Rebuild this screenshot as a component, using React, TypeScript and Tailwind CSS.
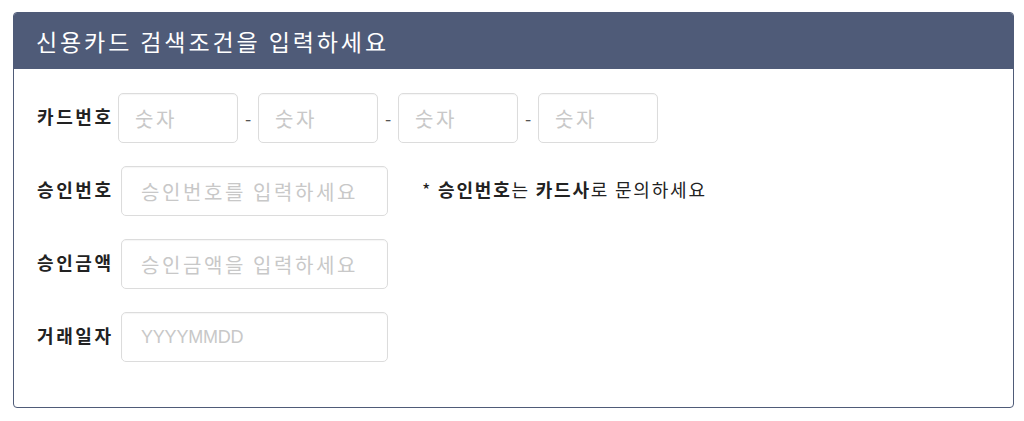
const font = { fontFamily: '"Noto Sans CJK KR", "Noto Sans", "Liberation Sans", sans-serif' }

function CardField() {
  return (
    <input
      type="text"
      placeholder="숫자"
      className="w-[120px] h-[50px] rounded-[5px] border border-[#dcdcdc] bg-white px-[16px] text-[20px] tracking-[2.5px] text-[#333] placeholder:text-[#c8c8c8] shadow-[inset_0_1px_1px_rgba(0,0,0,0.04)] outline-none"
    />
  )
}

function Dash() {
  return <span className="w-[20px] text-center text-[18px] text-[#555]">-</span>
}

export default function App() {
  const rows = [
    { label: "승인번호", placeholder: "승인번호를 입력하세요", latin: false, note: true },
    { label: "승인금액", placeholder: "승인금액을 입력하세요", latin: false, note: false },
    { label: "거래일자", placeholder: "YYYYMMDD", latin: true, note: false },
  ]

  return (
    <div className="bg-white w-[1024px] h-[421px] pt-[12px] pl-[13px]" style={font}>
      <div className="w-[1001px] rounded-[4px] border border-[#4f5b78] overflow-hidden">
        {/* header */}
        <div className="h-[56px] bg-[#4f5b78] pl-[22px] flex items-center">
          <h1 className="text-[23px] font-normal text-white tracking-[2.9px]">신용카드 검색조건을 입력하세요</h1>
        </div>

        {/* body */}
        <div className="pl-[23px] pt-[24px] pb-[45px] flex flex-col gap-[23px]">
          <div className="flex items-center">
            <span className="w-[81px] pb-[4px] text-[18px] font-bold text-[#222] tracking-[2.6px]">카드번호</span>
            <CardField />
            <Dash />
            <CardField />
            <Dash />
            <CardField />
            <Dash />
            <CardField />
          </div>

          {rows.map((row) => (
            <div key={row.label} className="flex items-center">
              <span className="w-[84px] pb-[4px] text-[18px] font-bold text-[#222] tracking-[2.6px]">{row.label}</span>
              <input
                type="text"
                placeholder={row.placeholder}
                className={
                  row.latin
                    ? "w-[267px] h-[50px] rounded-[5px] border border-[#dcdcdc] bg-white px-[19px] font-['Liberation_Sans',sans-serif] text-[18px] tracking-[-0.2px] text-[#333] placeholder:text-[#c8c8c8] shadow-[inset_0_1px_1px_rgba(0,0,0,0.04)] outline-none"
                    : "w-[267px] h-[50px] rounded-[5px] border border-[#dcdcdc] bg-white px-[19px] text-[20px] tracking-[2.6px] text-[#333] placeholder:text-[#c8c8c8] shadow-[inset_0_1px_1px_rgba(0,0,0,0.04)] outline-none"
                }
              />
              {row.note && (
                <p className="ml-[34px] pb-[4px] text-[18px] text-[#222] tracking-[1.8px]">
                  * <b className="font-bold">승인번호</b>는 <b className="font-bold">카드사</b>로 문의하세요
                </p>
              )}
            </div>
          ))}
        </div>
      </div>
    </div>
  )
}
